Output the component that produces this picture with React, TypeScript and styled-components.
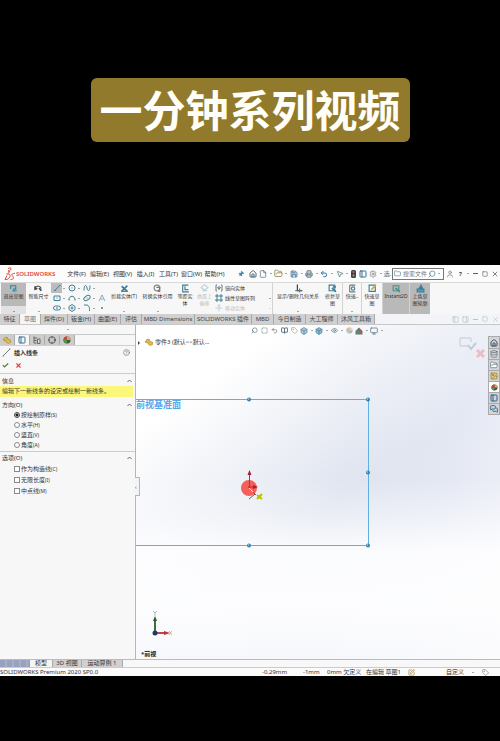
import React from "react";
import styled, { createGlobalStyle } from "styled-components";
import {
  Home, File, FolderOpen, Save, Printer, Undo2, MousePointer2, Search, Settings, User, Pin, Minus,
  Square, X, Check, Monitor, BookOpen, Folder, Image, Database, MessagesSquare, CircleHelp, PanelLeft,
  PanelRight, Crosshair, Box, Eye, SquareDashed, SquarePen, Tag,
} from "lucide-react";

const Global = createGlobalStyle`
  * { box-sizing: border-box; }
  body { margin: 0; background: #000; }
  button, input { font: inherit; color: inherit; margin: 0; padding: 0; border: 0; background: none; border-radius: 0; }
  body, button, input { font-family: "Noto Sans", "Noto Sans CJK SC", sans-serif; }
`;

const Page = styled.main`
  min-height: 100vh;
  background: #000;
  font-size: 6px;
  line-height: 8px;
  color: #333;
  white-space: nowrap;
`;

const TitleArea = styled.header`
  display: flex;
  justify-content: center;
  padding: 78px 0 123px;
`;

const Banner = styled.h1`
  margin: 0;
  padding: 0 9px 4px;
  border-radius: 6px;
  background: #917a2b;
  color: #fffef8;
  font: 700 43px/60px "Noto Sans CJK SC", sans-serif;
`;

const Window = styled.section`
  display: flex;
  flex-direction: column;
  background: #fbfbfb;
  overflow: hidden;
`;

const MenuBar = styled.div`
  display: flex;
  align-items: center;
  height: 18px;
  background: #fcfcfc;
  border-bottom: 1px solid #d9d9d9;
`;

const Brand = styled.div`
  display: flex;
  align-items: center;
  width: 65px;
  padding-left: 4px;
  color: #dc4636;
  font: 600 6px/10px "Noto Sans", sans-serif;
`;

const Menus = styled.nav`
  display: flex;
  flex: 1;
`;

const MenuButton = styled.button`
  width: 23px;
  text-align: center;
`;

const Tool = styled.button<{ $w?: number; $c?: string; $dim?: boolean }>`
  display: flex;
  align-items: center;
  justify-content: center;
  flex: none;
  width: ${(p) => p.$w ?? 10}px;
  height: 10px;
  color: ${(p) => p.$c ?? "#4b6572"};
  opacity: ${(p) => (p.$dim ? 0.4 : 1)};
`;

const Caret = styled.span<{ $w?: number }>`
  display: flex;
  align-items: center;
  justify-content: center;
  flex: none;
  width: ${(p) => p.$w ?? 6}px;
  height: 6px;
  &::after {
    content: "";
    border: 1px solid transparent;
    border-top-color: #555;
    border-bottom: 0;
  }
`;

const SearchBox = styled.label`
  display: flex;
  align-items: center;
  width: 52px;
  height: 12px;
  padding: 0 1px;
  border: 1px solid #777;
  background: #fff;
  color: #3e7382;
  input {
    flex: 1;
    min-width: 0;
    padding-left: 2px;
    font-size: 6px;
    outline: 0;
  }
`;

const Ribbon = styled.div`
  display: flex;
  height: 31px;
  padding-left: 1px;
  background: #f7f7f7;
  font-size: 5px;
`;

const Command = styled.button<{ $w: number; $on?: boolean; $split?: boolean; $dim?: boolean; $line?: boolean }>`
  display: flex;
  flex-direction: column;
  align-items: center;
  flex: none;
  width: ${(p) => p.$w}px;
  padding-top: 1px;
  line-height: 7px;
  white-space: pre;
  background: ${(p) => (p.$split ? "linear-gradient(#b9b9b9 75%, #e2e2e2 75%)" : p.$on ? "#b9b9b9" : "transparent")};
  border-right: ${(p) => (p.$line ? "1px solid #d2d2d2" : "0")};
  opacity: ${(p) => (p.$dim ? 0.3 : 1)};
  > span:first-of-type { flex: 1; }
`;

const SketchTools = styled.div`
  display: grid;
  grid-template-columns: 15px 15px 15px 13px;
  grid-template-rows: repeat(3, 10px);
  flex: none;
`;

const Pair = styled.span<{ $on?: boolean }>`
  display: flex;
  align-items: center;
  > button { background: ${(p) => (p.$on ? "#bcbcbc" : "transparent")}; }
`;

const Stack = styled.div`
  display: flex;
  flex-direction: column;
  flex: none;
  width: 58px;
  border-right: 1px solid #d2d2d2;
`;

const StackItem = styled.button<{ $dim?: boolean }>`
  display: flex;
  align-items: center;
  gap: 2px;
  height: 10px;
  opacity: ${(p) => (p.$dim ? 0.3 : 1)};
  > span:last-child:not(:nth-child(2)) { margin-left: auto; }
`;

const TabRow = styled.div`
  display: flex;
  height: 11px;
  background: #f3f4f7;
  border-bottom: 1px solid #c8c8c8;
`;

const Tab = styled.button<{ $w: number; $on?: boolean }>`
  flex: none;
  width: ${(p) => p.$w}px;
  background: ${(p) => (p.$on ? "#f5f5f5" : "#d0d0d0")};
  border-right: 1px solid #a9a9a9;
  color: ${(p) => (p.$on ? "#777" : "#444")};
  text-align: center;
`;

const Spacer = styled.span`
  flex: 1;
`;

const Workspace = styled.div`
  display: flex;
  min-height: 334px;
`;

const Panel = styled.aside`
  position: relative;
  flex: none;
  width: 136px;
  background: #f7f7f7;
  border-right: 1px solid #b5b5b5;
`;

const PanelGrip = styled.div`
  display: flex;
  align-items: center;
  justify-content: center;
  height: 10px;
  border-bottom: 1px solid #c9c9c9;
`;

const PanelTabs = styled.div`
  display: flex;
  height: 11px;
  border-bottom: 1px solid #d0d0d0;
`;

const PanelTab = styled.button<{ $on?: boolean }>`
  display: flex;
  align-items: center;
  justify-content: center;
  width: 15px;
  background: ${(p) => (p.$on ? "#f7f7f7" : "#cccccc")};
  border-right: 1px solid #aaa;
`;

const PanelTitle = styled.h2`
  display: flex;
  align-items: center;
  gap: 3px;
  height: 13px;
  margin: 0;
  padding: 0 5px 0 2px;
  font-size: 6px;
  font-weight: 600;
`;

const Confirm = styled.div`
  display: flex;
  align-items: center;
  gap: 3px;
  height: 15px;
  padding-bottom: 2px;
  border-bottom: 1px solid #ccc;
`;

const Section = styled.section<{ $line?: boolean }>`
  padding-bottom: 1px;
  border-top: 1px solid ${(p) => (p.$line ? "#ccc" : "transparent")};
`;

const Heading = styled.h3`
  display: flex;
  align-items: center;
  justify-content: space-between;
  height: 11px;
  margin: 0;
  padding: 0 3px 0 2px;
  font-size: 6px;
  font-weight: 400;
`;

const Message = styled.p`
  margin: 0 2px 0 0;
  padding: 0 2px;
  background: #fbf77a;
  line-height: 11px;
`;

const Choice = styled.label<{ $h: number }>`
  display: flex;
  align-items: center;
  gap: 1px;
  height: ${(p) => p.$h}px;
  padding-left: 14px;
  small { font-size: 5px; }
`;

const Mark = styled.input`
  appearance: none;
  width: 6px;
  height: 6px;
  border: 1px solid #888;
  background: #fff;
  &[type="radio"] { border-radius: 50%; }
  &[type="radio"]:checked { background: radial-gradient(#222 1px, #fff 2px); border-color: #444; }
  &[type="checkbox"]:checked { background: #555; }
`;

const Collapse = styled.button`
  position: absolute;
  right: -5px;
  top: 152px;
  z-index: 1;
  display: flex;
  align-items: center;
  width: 5px;
  height: 19px;
  background: #f4f4f4;
  border: 1px solid #b5b5b5;
  border-left: 0;
  font-size: 5px;
`;

const Viewport = styled.div`
  position: relative;
  flex: 1;
  overflow: hidden;
  background:
    linear-gradient(180deg, transparent 0 46%, rgba(254, 254, 255, 0.4) 57%, rgba(254, 254, 255, 0.92) 68%, rgba(254, 254, 255, 0.96) 85%, rgba(254, 254, 255, 0.75)),
    linear-gradient(145deg, #fff 0 18%, rgba(255, 255, 255, 0.6) 32%, transparent 54%),
    linear-gradient(100deg, #e4e8f2 0%, #dee3ef 55%, #e4e8f3 80%, #eff1f8 100%);
`;

const HeadsUp = styled.div`
  display: flex;
  align-items: center;
  height: 11px;
  padding-left: 113px;
`;

const Crumb = styled.div`
  display: flex;
  align-items: center;
  gap: 2px;
  height: 12px;
  padding-left: 2px;
`;

const PlaneName = styled.span`
  position: absolute;
  left: 0;
  top: 75px;
  color: #55a8e8;
  font-size: 9px;
  font-weight: 700;
  line-height: 10px;
`;

const Drawing = styled.svg`
  position: absolute;
  left: 0;
  top: 0;
`;

const ConfirmCorner = styled.svg`
  position: absolute;
  right: 14px;
  top: 11px;
`;

const TaskPane = styled.div`
  position: absolute;
  right: 0;
  top: 11px;
  display: flex;
  flex-direction: column;
  width: 12px;
  border: 1px solid #aaa;
`;

const TaskButton = styled.button<{ $on?: boolean; $c: string }>`
  display: flex;
  align-items: center;
  justify-content: center;
  height: 11px;
  background: ${(p) => (p.$on ? "#fff" : "#d3d5da")};
  color: ${(p) => p.$c};
  & + & { border-top: 1px solid #aaa; }
`;

const ViewName = styled.span`
  position: absolute;
  left: 5px;
  bottom: 1px;
  color: #222;
  font-weight: 700;
`;

const ModelTabs = styled.div`
  display: flex;
  height: 9px;
  background: #f8f8f8;
  border-top: 1px solid #bbb;
  border-bottom: 1px solid #ccc;
`;

const ModelTab = styled(Tab)`
  line-height: 7px;
  color: #333;
`;

const TabScroll = styled.div`
  width: 30px;
  background: repeating-linear-gradient(90deg, #98a1bd 0 5px, #a6afc8 5px 7px);
`;

const Status = styled.footer`
  display: grid;
  grid-template-columns: 262fr 41fr 24fr 39fr 42fr 38fr 24fr 12fr 18fr;
  align-items: center;
  height: 8px;
`;

const ink = "#3f7f93";

type SketchKind = "line" | "circle" | "spline" | "rect" | "arc" | "ellipse" | "slot" | "polygon" | "fillet" | "text" | "point";
const sketchPaths: Record<SketchKind, React.ReactNode> = {
  line: <><path d="M3 14 13 3" /><path d="M2 13h3M12 3h3" /></>,
  circle: <><circle cx="8" cy="8" r="6" /><path d="M8 7v2" /></>,
  spline: <path d="M2 13C2 0 7 1 8 8s6 8 6-5" />,
  rect: <><path d="M2 4h12v9H2z" /><path d="M7 8h2" /></>,
  arc: <><path d="M2 12C2 2 14 2 14 12" /><path d="M2 11v2M14 11v2" /></>,
  ellipse: <><ellipse cx="8" cy="8" rx="7" ry="4" transform="rotate(-35 8 8)" /><path d="M8 7v2" /></>,
  slot: <><rect x="1" y="4" width="14" height="8" rx="4" /><path d="M6 8h4" /></>,
  polygon: <><path d="m8 1 6 4v6l-6 4-6-4V5z" /><circle cx="8" cy="8" r="2" /></>,
  fillet: <path d="M2 2h4c6 0 7 4 7 12" />,
  text: <path d="m2 14 6-12 6 12M5 10h6" opacity="0.6" />,
  point: <path d="M6 8h4M8 6v4" />,
};

function SketchIcon({ kind }: { kind: SketchKind }) {
  return (
    <svg width="8" height="8" viewBox="0 0 16 16" fill="none" stroke={ink} strokeWidth="2">
      {sketchPaths[kind]}
    </svg>
  );
}

type GlyphKind = "exit" | "dimension" | "trim" | "convert" | "offset" | "surface" | "mirror" | "pattern" | "move" | "relations" | "repair" | "snap" | "rapid" | "instant" | "shaded";
const glyphs: Record<GlyphKind, React.ReactNode> = {
  exit: <><path d="M3 9V3h9v6H7" /><path d="M14 12H8m2-2-3 2 3 2" stroke="#23a0b5" /></>,
  dimension: <><path d="M2 8C4 2 10 2 13 8" stroke="#444" /><path d="m2 4 0 5 4-1M9 7l4 5" stroke="#444" strokeWidth="3" /></>,
  trim: <><path d="m3 4 10 9M13 3 3 13" strokeWidth="3" /><path d="M2 13h12" /></>,
  convert: <><circle cx="7" cy="7" r="5" stroke="#888" /><path d="M6 6h6v7H8" stroke="#777" /></>,
  offset: <><path d="M3 1v13h11M7 4v6h6M3 2h10" /></>,
  surface: <path d="m8 1 6 5-6 5-6-5zM4 12h9" />,
  mirror: <><path d="M8 4v8" /><path d="M4 2H2v12h2M12 2h2v12h-2M5 6l2 4M11 6l-2 4" stroke="#777" /></>,
  pattern: <path d="M2 2h4v4H2zM10 2h4v4h-4zM2 10h4v4H2zM10 10h4v4h-4z" />,
  move: <path d="M8 1v14M1 8h14M5 4l3-3 3 3" />,
  relations: <><path d="M6 1v11h9" stroke="#333" /><path d="M2 12h5M10 8v7" /></>,
  repair: <><path d="M2 2h10v10H2z" /><path d="m7 7 7 7M9 5h5" strokeWidth="3" /></>,
  snap: <><path d="M3 2h10M3 14h10M3 2v12" stroke="#777" /><circle cx="9" cy="8" r="3" /></>,
  rapid: <><path d="M2 2h11v11H2z" /><path d="m6 10 8-8" stroke="#d8a735" strokeWidth="3" /></>,
  instant: <><path d="M2 3h10v9H2z" stroke="#459181" /><path d="m6 7 8 7" stroke="#459181" strokeWidth="3" /></>,
  shaded: <><path d="M2 9h12v5H2z" fill="#58a0b8" /><path d="m5 9 4-7 3 7" fill="#2681a4" /></>,
};

function Glyph({ kind, size = 9 }: { kind: GlyphKind; size?: number }) {
  return (
    <svg width={size} height={size} viewBox="0 0 16 16" fill="none" stroke={ink} strokeWidth="2">
      {glyphs[kind]}
    </svg>
  );
}

function Part({ size = 8 }: { size?: number }) {
  return (
    <svg width={size} height={size} viewBox="0 0 16 16" stroke="#9b731f">
      <path d="M1 6 5 2l4 1 1 4 5 1v5l-4 2-4-2-1-3-5-1z" fill="#e4bc4a" />
      <circle cx="5" cy="6" r="2" fill="#fff0a8" />
    </svg>
  );
}

function Sphere({ size = 7 }: { size?: number }) {
  return (
    <svg width={size} height={size} viewBox="0 0 16 16">
      <circle cx="8" cy="8" r="7" fill="#454f58" />
      <path d="M8 8V1a7 7 0 0 1 7 7z" fill="#e0aa38" />
      <path d="M8 8H1a7 7 0 0 1 7-7z" fill="#cd4540" />
      <path d="M8 8v7a7 7 0 0 1-7-7z" fill="#59944f" />
    </svg>
  );
}

function Scene() {
  return (
    <svg width="8" height="8" viewBox="0 0 16 16">
      <path d="M1 8 8 1l7 7v7H1z" fill="#66747c" />
      <circle cx="6" cy="10" r="3" fill="#55985d" />
      <circle cx="11" cy="9" r="3" fill="#b65d4d" />
    </svg>
  );
}

function Logo() {
  return (
    <svg width="12" height="14" viewBox="0 0 24 28" fill="none" stroke="#dc4636" strokeWidth="2">
      <path d="M8 3c4-2 7-1 6 1-1 3-4 4-6 4 5 0 4 3-1 5" />
      <path d="M5 14c8-1 9 3 5 8-2 3-5 3-8 3l4-8" />
      <path d="M22 13c-5-1-8 2-5 5s3 7-4 7" />
    </svg>
  );
}

const menus = ["文件(F)", "编辑(E)", "视图(V)", "插入(I)", "工具(T)", "窗口(W)", "帮助(H)"];

const sketchRows: [SketchKind, boolean][] = [
  ["line", true], ["circle", true], ["spline", true], ["point", false],
  ["rect", true], ["arc", true], ["ellipse", true], ["text", false],
  ["slot", true], ["polygon", true], ["fillet", true], ["point", false],
];

const tabs: [string, number][] = [
  ["特征", 20], ["草图", 21], ["焊件(D)", 27], ["钣金(H)", 27], ["曲面(E)", 26], ["评估", 21],
  ["MBD Dimensions", 53], ["SOLIDWORKS 插件", 57], ["MBD", 22], ["今日制造", 32], ["大工程师", 32], ["沐风工具箱", 37],
];

const directions = [["按绘制原样", "(S)"], ["水平", "(H)"], ["竖直", "(V)"], ["角度", "(A)"]];
const options = [["作为构造线", "(C)"], ["无限长度", "(I)"], ["中点线", "(M)"]];

const nodes = [[113, 74], [232, 74], [232, 147], [232, 220], [113, 220]];

function TopBar() {
  return (
    <MenuBar>
      <Brand><Logo />SOLIDWORKS</Brand>
      <Menus>{menus.map((m) => <MenuButton key={m}>{m}</MenuButton>)}</Menus>
      <Tool $w={14} $c="#2f7fa6" aria-label="固定"><Pin size={6} fill="currentColor" transform="rotate(45)" /></Tool>
      <Tool aria-label="主页"><Home size={8} strokeWidth={3} /></Tool>
      <Tool aria-label="新建"><File size={8} /></Tool><Caret $w={5} />
      <Tool $c="#8d7a3c" aria-label="打开"><FolderOpen size={9} /></Tool><Caret $w={6} />
      <Tool $c="#3e6c94" aria-label="保存"><Save size={8} fill="#b9d0e0" /></Tool><Caret $w={5} />
      <Tool aria-label="打印"><Printer size={8} fill="#bcc8cd" /></Tool><Caret $w={5} />
      <Tool $c="#3474a3" aria-label="撤销"><Undo2 size={8} strokeWidth={3} /></Tool><Caret $w={6} />
      <Tool $w={9} aria-label="选择"><MousePointer2 size={8} /></Tool><Caret $w={5} />
      <Tool $w={9} aria-label="重建模型">
        <svg width="5" height="8" viewBox="0 0 10 16"><rect width="10" height="16" rx="3" fill="#444" /><circle cx="5" cy="4" r="2" fill="#d55" /><circle cx="5" cy="11" r="2" fill="#7b6" /></svg>
      </Tool>
      <Tool $c="#397196" aria-label="文件属性"><PanelLeft size={8} strokeWidth={3} /></Tool>
      <Tool $c="#777" aria-label="选项"><Settings size={8} /></Tool><Caret $w={5} />
      <Tool $w={9} aria-label="更多">选.</Tool>
      <SearchBox>
        <Folder size={7} />
        <input aria-label="搜索文件" placeholder="搜索文件" />
        <Search size={8} transform="scale(-1 1)" />
        <Caret $w={6} />
      </SearchBox>
      <Tool $w={12} $c="#777" aria-label="登录"><User size={8} /></Tool>
      <Tool $w={9} $c="#333" aria-label="帮助"><b>?</b></Tool><Caret $w={6} />
      <Tool $w={9} $c="#444" aria-label="最小化"><Minus size={7} strokeWidth={3} /></Tool>
      <Tool $w={10} $c="#444" aria-label="最大化"><Square size={6} /></Tool>
      <Tool $w={10} $c="#444" aria-label="关闭"><X size={8} /></Tool>
    </MenuBar>
  );
}

function CommandRibbon() {
  return (
    <Ribbon>
      <Command $w={25} $split><Glyph kind="exit" /><span>退出草图</span><Caret /></Command>
      <Command $w={25}><Glyph kind="dimension" /><span>智能尺寸</span><Caret /></Command>
      <SketchTools>
        {sketchRows.map(([kind, more], i) => (
          <Pair key={i} $on={i === 0}>
            {i !== 3 && <Tool $w={11} aria-label={kind}><SketchIcon kind={kind} /></Tool>}
            {more && <Caret $w={4} />}
          </Pair>
        ))}
      </SketchTools>
      <Command $w={30}><Glyph kind="trim" /><span>剪裁实体(T)</span><Caret /></Command>
      <Command $w={37}><Glyph kind="convert" /><span>转换实体引用</span><Caret /></Command>
      <Command $w={18}><Glyph kind="offset" /><span>{"等距实\n体"}</span></Command>
      <Command $w={21} $dim><Glyph kind="surface" /><span>{"曲面上\n偏移"}</span></Command>
      <Stack>
        <StackItem><Glyph kind="mirror" size={8} /><span>镜向实体</span></StackItem>
        <StackItem><Glyph kind="pattern" size={8} /><span>线性草图阵列</span><Caret $w={4} /></StackItem>
        <StackItem $dim><Glyph kind="move" size={8} /><span>移动实体</span><Caret $w={4} /></StackItem>
      </Stack>
      <Command $w={50}><Glyph kind="relations" /><span>显示/删除几何关系</span><Caret /></Command>
      <Command $w={20} $line><Glyph kind="repair" /><span>{"修复草\n图"}</span></Command>
      <Command $w={19} $line><Glyph kind="snap" /><span>快速..</span><Caret /></Command>
      <Command $w={21} $line><Glyph kind="rapid" /><span>{"快速草\n图"}</span></Command>
      <Command $w={27} $on $line><Glyph kind="instant" /><span>Instant2D</span></Command>
      <Command $w={20} $on><Glyph kind="shaded" /><span>{"上色草\n图轮廓"}</span></Command>
    </Ribbon>
  );
}

function PropertyPanel() {
  return (
    <Panel>
      <PanelGrip><Caret /></PanelGrip>
      <PanelTabs>
        <PanelTab aria-label="特征树"><Part /></PanelTab>
        <PanelTab $on aria-label="属性"><PanelLeft size={8} color="#397196" strokeWidth={3} /></PanelTab>
        <PanelTab aria-label="配置">
          <svg width="8" height="8" viewBox="0 0 16 16" fill="none" stroke="#666" strokeWidth="2"><path d="M2 1v13h5M2 4h6M2 9h5" /><path d="M9 6h5v9H9z" fill="#ddd" /></svg>
        </PanelTab>
        <PanelTab aria-label="尺寸专家"><Crosshair size={8} color="#333" /></PanelTab>
        <PanelTab aria-label="外观"><Sphere size={8} /></PanelTab>
      </PanelTabs>
      <PanelTitle>
        <svg width="9" height="9" viewBox="0 0 18 18" stroke="#777" strokeWidth="2"><path d="M2 16 16 2" /><path d="M1 16h3M14 2h3" stroke="#5795ad" /></svg>
        插入线条
        <Spacer />
        <CircleHelp size={7} color="#667" />
      </PanelTitle>
      <Confirm>
        <Tool $c="#57743b" aria-label="确定"><Check size={7} strokeWidth={4} /></Tool>
        <Tool $c="#db4845" aria-label="取消"><X size={7} strokeWidth={4} /></Tool>
      </Confirm>
      <Section>
        <Heading>信息 <Chevron /></Heading>
        <Message>编辑下一新线条的设定或绘制一新线条。</Message>
      </Section>
      <Section>
        <Heading>方向(O) <Chevron /></Heading>
        {directions.map(([name, key], i) => (
          <Choice $h={10} key={name}><Mark type="radio" name="direction" defaultChecked={i === 0} /><span>{name}<small>{key}</small></span></Choice>
        ))}
      </Section>
      <Section $line>
        <Heading>选项(O) <Chevron /></Heading>
        {options.map(([name, key]) => (
          <Choice $h={11} key={name}><Mark type="checkbox" /><span>{name}<small>{key}</small></span></Choice>
        ))}
      </Section>
      <Collapse aria-label="折叠面板">‹</Collapse>
    </Panel>
  );
}

function Chevron() {
  return <svg width="5" height="4" viewBox="0 0 10 8" fill="none" stroke="#666" strokeWidth="2"><path d="m1 6 4-4 4 4" /></svg>;
}

function ModelView() {
  return (
    <Viewport>
      <PlaneName>前视基准面</PlaneName>
      <Drawing width="240" height="334" viewBox="0 0 240 334" fill="none">
        <path d="M0 74.500H232.500V220.500H0" stroke="#5fafe0" />
        {nodes.map(([x, y]) => (
          <g key={`${x}-${y}`}><circle cx={x} cy={y + 0.5} r="2" fill="#347eaa" /><circle cx={x - 0.5} cy={y} r="0.8" fill="#a7d6ed" /></g>
        ))}
        <circle cx="113" cy="163" r="8" fill="#f45f5c" />
        <path d="M113.500 163V148" stroke="#c42d38" />
        <path d="m111.500 150 2-5 2 5zM117 160l5 2-5 2z" fill="#a7202d" />
        <path d="M112 162h6" stroke="#b22b30" />
        <path d="m113 163 7 7M113 174l6-5" stroke="#7d5b42" />
        <path d="m113 163 4 4" stroke="#ee9" />
        <path d="m121 174 5-5M121 170l5 4" stroke="#bdbf00" strokeWidth="2" />
        <path d="M19 308V294" stroke="#397344" strokeWidth="2" />
        <path d="m17 296 2-5 2 5z" fill="#285c36" />
        <path d="M19 308h12" stroke="#c14747" strokeWidth="2" />
        <path d="m28 306 6 2-6 2z" fill="#b73535" />
        <circle cx="19" cy="308" r="2.500" fill="#25336f" />
        <path d="m17 286 2 2 2-2M19 288v3" stroke="#92a096" strokeWidth="0.700" />
        <path d="m33 306 3 4M36 306l-3 4" stroke="#d88" strokeWidth="0.700" />
      </Drawing>
      <HeadsUp>
        <Tool aria-label="整屏显示"><Search size={7} transform="scale(-1 1)" /></Tool>
        <Tool aria-label="局部放大"><SquareDashed size={7} /></Tool>
        <Tool aria-label="上一视图"><Undo2 size={7} /></Tool>
        <Tool aria-label="剖面视图"><BookOpen size={7} strokeWidth={3} /></Tool>
        <Tool $c="#a6894c" aria-label="标注视图"><Tag size={7} /></Tool>
        <Tool $c="#47758e" aria-label="视图定向"><Box size={8} fill="#b5cfdd" /></Tool><Caret $w={5} />
        <Tool $c="#397da1" aria-label="显示样式"><Box size={8} fill="#8fb9cf" /></Tool><Caret $w={5} />
        <Tool aria-label="隐藏项目"><Eye size={7} /></Tool><Caret $w={5} />
        <Tool $dim aria-label="编辑外观"><Sphere /></Tool>
        <Tool aria-label="应用布景"><Scene /></Tool><Caret $w={5} />
        <Tool aria-label="视图设置"><Monitor size={8} /></Tool><Caret $w={5} />
      </HeadsUp>
      <Crumb>
        <svg width="3" height="5" viewBox="0 0 3 5"><path d="m0 1 2 2-2 2z" fill="#444" /></svg>
        <span /><Part />
        零件3 (默认&lt;&lt;默认...
      </Crumb>
      <ConfirmCorner width="28" height="24" viewBox="0 0 28 24" fill="none" stroke="#c3c9d8">
        <path d="M11 10H2V2h11v4" />
        <path d="m10 9 3 4 5-6" strokeWidth="2" />
        <path d="m19 14 7 7M26 14l-7 7" stroke="#edbdc4" strokeWidth="3" />
      </ConfirmCorner>
      <TaskPane>
        <TaskButton $c="#394d5c" aria-label="资源"><Home size={8} strokeWidth={3} /></TaskButton>
        <TaskButton $c="#5b6a72" aria-label="设计库"><Database size={8} /></TaskButton>
        <TaskButton $c="#526974" aria-label="文件探索器"><FolderOpen size={8} fill="#fff" /></TaskButton>
        <TaskButton $c="#8a7630" aria-label="视图调色板"><Image size={8} fill="#e2cb71" /></TaskButton>
        <TaskButton $on $c="#333" aria-label="外观"><Sphere /></TaskButton>
        <TaskButton $c="#2f6288" aria-label="自定义属性"><PanelLeft size={8} strokeWidth={3} /></TaskButton>
        <TaskButton $c="#3c6e8d" aria-label="论坛"><MessagesSquare size={8} strokeWidth={3} /></TaskButton>
      </TaskPane>
      <ViewName>*前视</ViewName>
    </Viewport>
  );
}

export default function App() {
  return (
    <Page>
      <Global />
      <TitleArea><Banner>一分钟系列视频</Banner></TitleArea>
      <Window>
        <TopBar />
        <CommandRibbon />
        <TabRow>
          {tabs.map(([name, w]) => <Tab key={name} $w={w} $on={name === "草图"}>{name}</Tab>)}
          <Spacer />
          <Tool $dim aria-label="左侧窗口"><PanelLeft size={7} /></Tool>
          <Tool $dim aria-label="右侧窗口"><PanelRight size={7} /></Tool>
          <Tool $dim aria-label="最小化文档"><Minus size={7} strokeWidth={3} /></Tool>
          <Tool $dim aria-label="还原文档"><Square size={6} /></Tool>
          <Tool $dim aria-label="关闭文档"><X size={7} /></Tool>
        </TabRow>
        <Workspace><PropertyPanel /><ModelView /></Workspace>
        <ModelTabs>
          <TabScroll />
          <ModelTab $w={23} $on>模型</ModelTab>
          <ModelTab $w={29}>3D 视图</ModelTab>
          <ModelTab $w={41}>运动算例 1</ModelTab>
        </ModelTabs>
        <Status>
          <span>SOLIDWORKS Premium 2020 SP0.0</span>
          <span>-0.29mm</span><span>-1mm</span><span>0mm 欠定义</span><span>在编辑 草图1</span>
          <SquarePen size={7} color="#8a6e24" />
          <span>自定义</span><Caret $w={6} /><Tag size={7} color="#777" />
        </Status>
      </Window>
    </Page>
  );
}
